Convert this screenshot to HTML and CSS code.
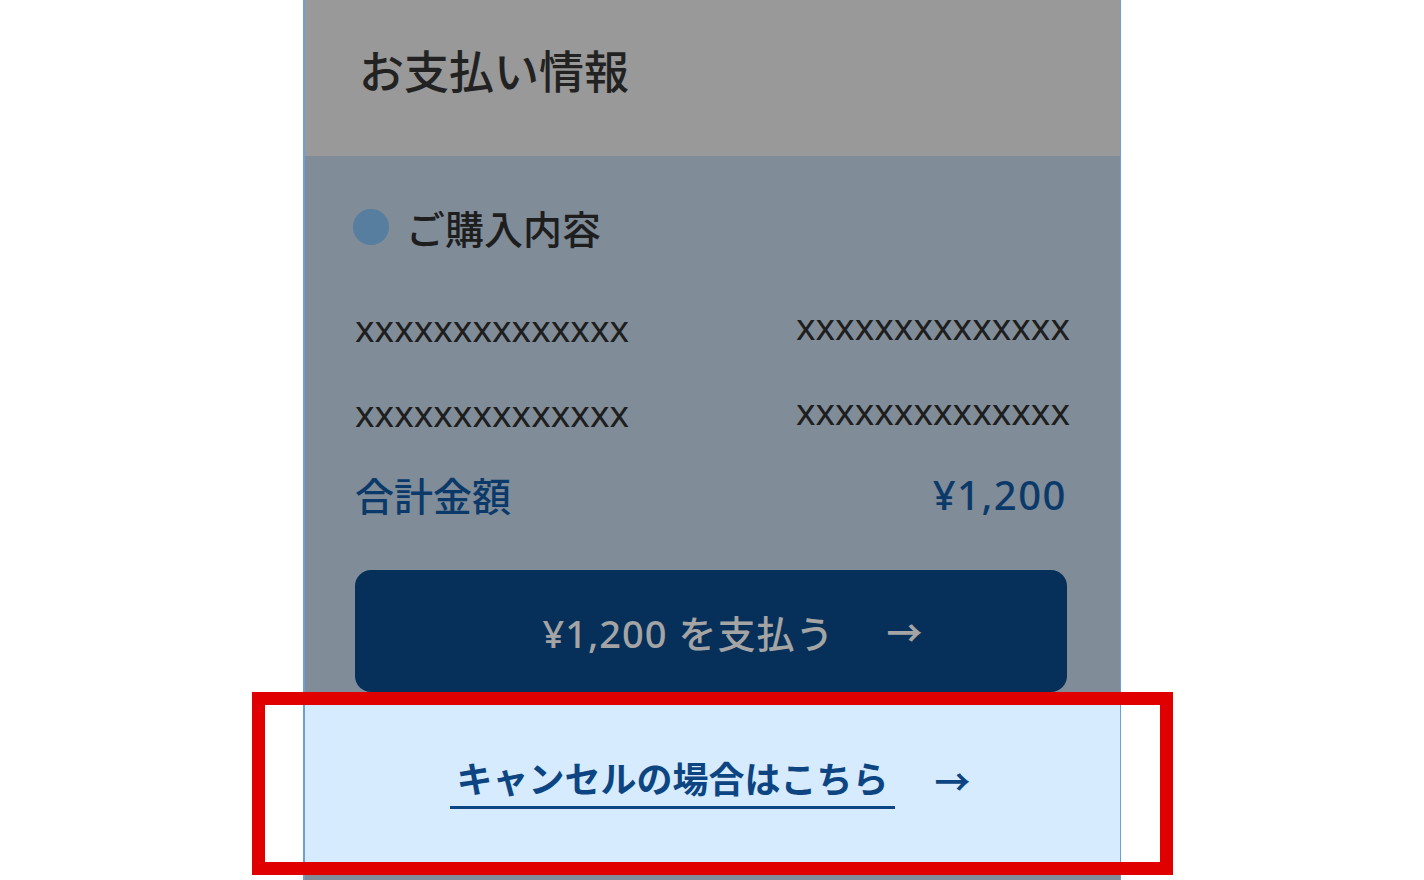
FILE: index.html
```html
<!DOCTYPE html>
<html lang="ja">
<head>
<meta charset="utf-8">
<title>お支払い情報</title>
<link rel="stylesheet" href="styles.css">
</head>
<body>
<div class="page">
  <section class="panel">
    <header class="panel-head">
      <h1 class="panel-title">お支払い情報</h1>
    </header>
    <div class="panel-body">
      <h2 class="section-title"><span class="dot"></span>ご購入内容</h2>
      <dl class="items">
        <div class="item"><dt>xxxxxxxxxxxxxx</dt><dd>xxxxxxxxxxxxxx</dd></div>
        <div class="item"><dt>xxxxxxxxxxxxxx</dt><dd>xxxxxxxxxxxxxx</dd></div>
        <div class="item total"><dt>合計金額</dt><dd>¥1,200</dd></div>
      </dl>
      <button class="pay" type="button"><span>¥1,200 を支払う</span><span class="arrow">→</span></button>
    </div>
    <div class="cancel">
      <a class="cancel-link" href="#">キャンセルの場合はこちら</a><span class="arrow">→</span>
    </div>
    <div class="panel-foot"></div>
  </section>
  <div class="highlight"></div>
</div>
</body>
</html>
```
FILE: styles.css
```css
* { box-sizing: border-box; }

html, body {
  margin: 0;
  padding: 0;
  background: #ffffff;
}

body {
  font-family: "Noto Sans", "Noto Sans CJK JP", sans-serif;
  color: #1e1e1e;
}

.page {
  position: relative;
  width: 1424px;
  height: 880px;
  overflow: hidden;
}

.panel {
  width: 818px;
  margin: 0 auto;
  border-left: 2px solid #6d9fd6;
  border-right: 1px solid #6d9fd6;
  background: #808c98;
}

.panel-head {
  height: 156px;
  background: #989998;
  display: flex;
  align-items: center;
  padding: 0 0 18px 54px;
}

.panel-title {
  margin: 0;
  font-family: "Noto Sans CJK JP", sans-serif;
  font-size: 45px;
  font-weight: 500;
  line-height: 1;
  color: #222222;
}

.panel-body {
  padding: 48px 53px 0 50px;
}

.section-title {
  margin: 0 0 0 -2px;
  height: 46px;
  display: flex;
  align-items: center;
  gap: 17px;
  font-family: "Noto Sans CJK JP", sans-serif;
  font-size: 39px;
  font-weight: 500;
  color: #1e1e1e;
}

.dot {
  width: 36px;
  height: 36px;
  border-radius: 50%;
  background: #577e9f;
  flex: none;
}

.items {
  margin: 35px -3px 0 0;
  padding: 0;
}

.item {
  height: 85px;
  display: flex;
  align-items: center;
  justify-content: space-between;
}

.item dt,
.item dd {
  margin: 0;
  font-size: 37px;
  line-height: 1;
  color: #1e1e1e;
}

.item dd { position: relative; top: -2px; }

.item.total dt,
.item.total dd {
  position: relative;
  top: -3px;
  color: #0b3a6a;
}

.item.total dt {
  font-family: "Noto Sans CJK JP", sans-serif;
  font-size: 39px;
  font-weight: 500;
}

.item.total dd {
  font-size: 40px;
  font-weight: 500;
  letter-spacing: 1.5px;
  margin-right: 3px;
}

.pay {
  margin-top: 30px;
  width: 100%;
  height: 122px;
  border: 0;
  border-radius: 16px;
  background: #06305a;
  color: #a4a4a4;
  font-family: "Noto Sans", "Noto Sans CJK JP", sans-serif;
  font-size: 38px;
  font-weight: 500;
  letter-spacing: 1px;
  display: flex;
  align-items: center;
  justify-content: center;
  gap: 52px;
  padding: 0 0 0 44px;
}

.arrow {
  font-family: "Noto Sans CJK JP", sans-serif;
  font-size: 36px;
  font-weight: 700;
}

.cancel {
  height: 176px;
  background: #d6ebfd;
  display: flex;
  align-items: center;
  justify-content: center;
  gap: 40px;
  padding-right: 4px;
  color: #0c4582;
}

.cancel-link {
  font-family: "Noto Sans CJK JP", sans-serif;
  font-size: 36px;
  font-weight: 700;
  color: #0c4582;
  text-decoration: none;
  padding: 0 6px 7px;
  border-bottom: 3px solid #0c4582;
  line-height: 1.15;
  position: relative;
  top: 3px;
}

.cancel .arrow {
  color: #0c4582;
}

.panel-foot {
  height: 40px;
}

/* annotation frame drawn over the cancel block */
.highlight {
  position: absolute;
  left: 252px;
  top: 692px;
  width: 921px;
  height: 183px;
  border: 13px solid #e00000;
  pointer-events: none;
}
```
